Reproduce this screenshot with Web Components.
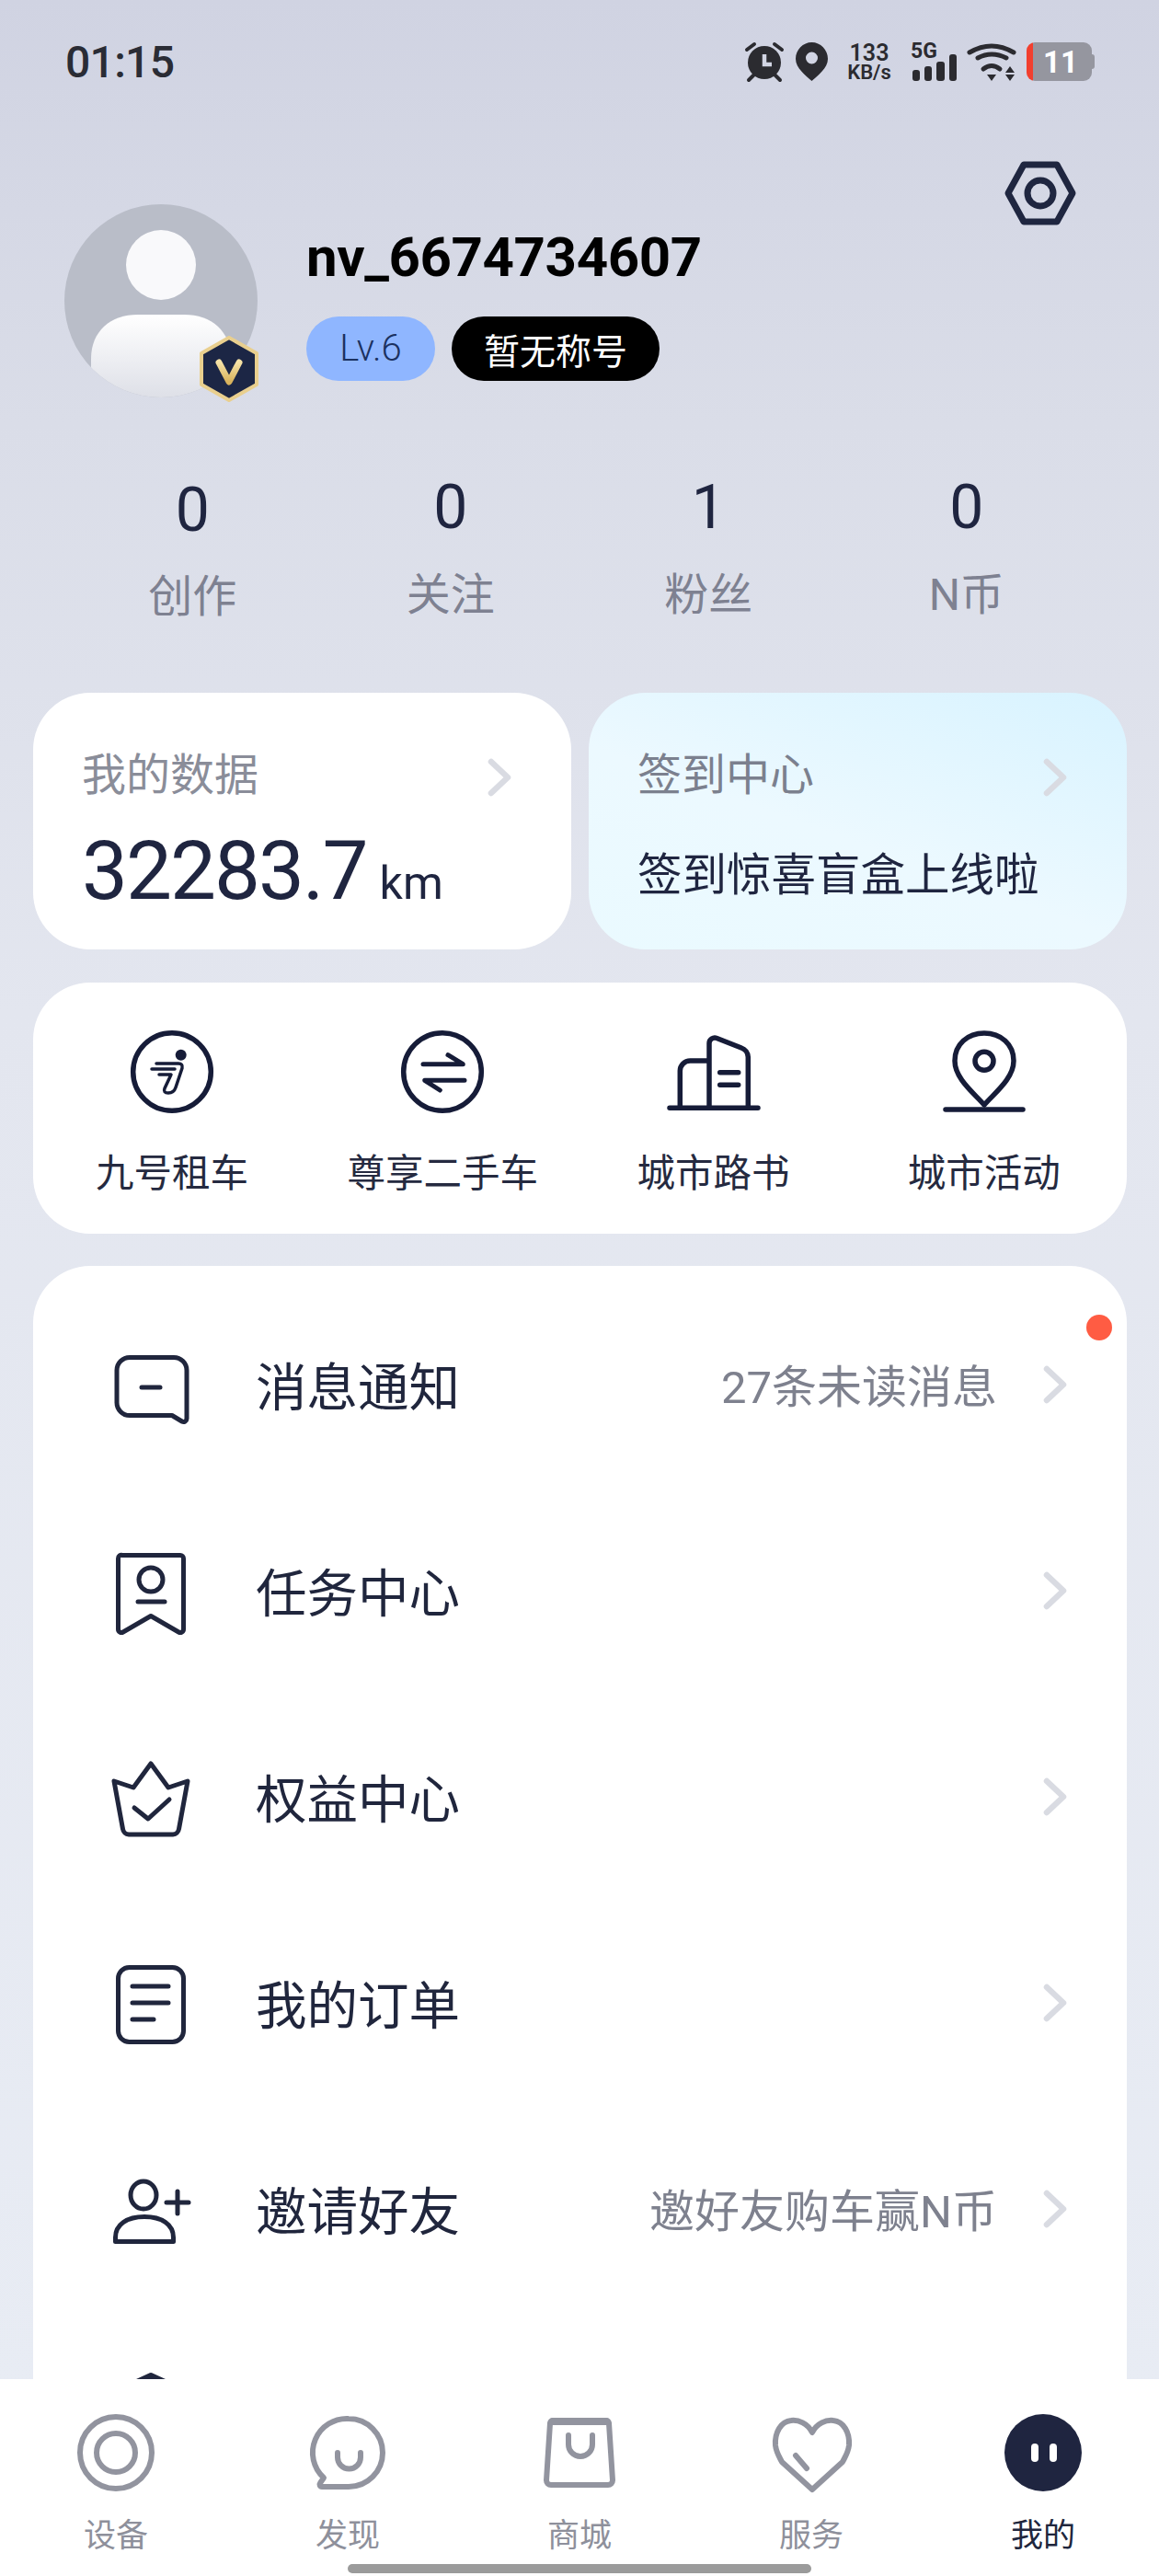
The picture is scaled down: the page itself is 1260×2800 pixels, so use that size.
<!DOCTYPE html>
<html lang="zh">
<head>
<meta charset="utf-8">
<title>我的</title>
<style>
html,body{margin:0;padding:0;background:#e5e8f1}
body{font-family:"Roboto","Noto Sans CJK SC",sans-serif;color:#1f2540}
</style>
</head>
<body>
<x-page>
  <x-status-bar slot="top"></x-status-bar>
  <x-profile name="nv_6674734607" level="Lv.6" title="暂无称号"></x-profile>
  <x-stats>
    <x-stat value="0" nudge>创作</x-stat>
    <x-stat value="0">关注</x-stat>
    <x-stat value="1">粉丝</x-stat>
    <x-stat value="0">N币</x-stat>
  </x-stats>
  <x-cards>
    <x-card heading="我的数据"><x-mileage value="32283.7" unit="km"></x-mileage></x-card>
    <x-card heading="签到中心" tone="sky"><x-promo>签到惊喜盲盒上线啦</x-promo></x-card>
  </x-cards>
  <x-quick-grid>
    <x-quick icon="scooter">九号租车</x-quick>
    <x-quick icon="swap">尊享二手车</x-quick>
    <x-quick icon="city">城市路书</x-quick>
    <x-quick icon="place">城市活动</x-quick>
  </x-quick-grid>
  <x-list>
    <x-row icon="msg"><span>消息通知</span><span slot="hint">27条未读消息</span></x-row>
    <x-row icon="task">任务中心</x-row>
    <x-row icon="crown">权益中心</x-row>
    <x-row icon="order">我的订单</x-row>
    <x-row icon="invite"><span>邀请好友</span><span slot="hint">邀好友购车赢N币</span></x-row>
    <x-row icon="shield" bare></x-row>
  </x-list>
  <x-nav slot="nav">
    <x-nav-item icon="n-device">设备</x-nav-item>
    <x-nav-item icon="n-find">发现</x-nav-item>
    <x-nav-item icon="n-shop">商城</x-nav-item>
    <x-nav-item icon="n-serve">服务</x-nav-item>
    <x-nav-item icon="n-me" active>我的</x-nav-item>
  </x-nav>
</x-page>
<script>
const S='fill="none" stroke="currentColor" stroke-linecap="round" stroke-linejoin="round"';
const ICONS={
 msg:`<g ${S} stroke-width="5"><path d="M27 17.5H75a14 14 0 0 1 14 14V84a3.5 3.5 0 0 1-5.2 3L73 80.5H27a14 14 0 0 1-14-14V31.5a14 14 0 0 1 14-14Z"/><path d="M40 50H60"/></g>`,
 task:`<g ${S} stroke-width="5"><path d="M19 8.5H82a3.5 3.5 0 0 1 3.5 3.5V89a3.5 3.5 0 0 1-5.3 3L50 74.5 19.8 92a3.5 3.5 0 0 1-5.3-3V12a3.5 3.5 0 0 1 4.5-3.5Z"/><circle cx="50" cy="35" r="13"/><path d="M36 59H65"/></g>`,
 crown:`<g ${S} stroke-width="5"><path d="M10 30 31 37 50 11 69 37 90 30 80.5 82a7 7 0 0 1-6.5 6H26a7 7 0 0 1-6.5-6Z"/><path d="M32 59 47 71 70 50"/></g>`,
 order:`<g ${S} stroke-width="5"><rect x="14.5" y="8.5" width="71" height="81" rx="12"/><path d="M30 29H69M30 47H69M30 65H53"/></g>`,
 invite:`<g ${S} stroke-width="5"><ellipse cx="42" cy="32" rx="14" ry="15"/><path d="M11.5 82.5V78C11.5 64 24 55.5 43 55.5S74.5 64 74.5 78v4.5Z"/><path d="M67 40H91M79 28V52"/></g>`,
 shield:`<g ${S} stroke-width="6"><path d="M50 4 85 20V70L50 96 15 70V20Z"/></g>`,
 scooter:`<g ${S}><circle cx="50" cy="50" r="42.3" stroke-width="5.5"/><path stroke-width="3.5" d="M33 41H57Q62 41 61 46L54 67Q52 73 46 73 40 73 42 68L49 53H36M28 47H53"/></g><circle cx="59.7" cy="31.7" r="6" fill="currentColor"/>`,
 swap:`<g ${S} stroke-width="5"><circle cx="50" cy="50" r="42.3" stroke-width="5.5"/><path d="M29 41.7H72.3L56 31.7M74 59.3H30.7L47.3 70"/></g>`,
 city:`<g ${S} stroke-width="5.5"><path d="M2 89.3H98M45 89V19a6 6 0 0 1 8.3-5.5L80 24a11 11 0 0 1 7.3 10V89M13.3 89V49a11 11 0 0 1 11-11H45"/><path d="M56.7 50.7H76.7M56.7 64.3H76.7"/></g>`,
 place:`<g ${S} stroke-width="5.5"><path d="M50 86C40 74 18 58 18 38 18 20 32 8 50 8S82 20 82 38C82 58 60 74 50 86Z"/><circle cx="50" cy="38.3" r="10"/><path d="M8 91H92"/></g>`,
 'n-device':`<g ${S} stroke-width="6"><circle cx="50" cy="50" r="39"/><circle cx="50" cy="50" r="21"/></g>`,
 'n-find':`<g ${S} stroke-width="6"><path d="M51 13a37 37 0 0 1 0 74H22a2.5 2.5 0 0 1-2-4l4-5.7A37 37 0 0 1 51 13Z"/><path d="M39 50v5a12.500 12.500 0 0 0 25 0v-5"/></g>`,
 'n-shop':`<g ${S} stroke-width="6"><path d="M21 15H79a3 3 0 0 1 3 3L86 80a5 5 0 0 1-5 5H19a5 5 0 0 1-5-5L18 18a3 3 0 0 1 3-3Z"/><path stroke-width="8" d="M21 16H79"/><path d="M38 31V41a13 13 0 0 0 26 0V31"/></g>`,
 'n-serve':`<g ${S} stroke-width="6"><path d="M51 28C46 18 36 14 28 15 17 16 10 28 11 42 12 50 15 54 18 60L51 90 84 60C87 54 90 50 91 42 92 28 85 16 74 15 66 14 56 18 51 28Z"/><path d="M33 53 45 67"/></g>`,
 'n-me':`<circle cx="50" cy="50" r="42" fill="#1f2540"/><rect x="37" y="40" width="8" height="20" rx="4" fill="#fff"/><rect x="57" y="40" width="8" height="20" rx="4" fill="#fff"/>`,
 chev:`<path d="M4 4 22 21 4 38" fill="none" stroke="currentColor" stroke-width="6.5" stroke-linecap="round" stroke-linejoin="round"/>`,
 gear:`<g ${S} stroke-width="7"><path d="M5 37 22 6H58L75 37 58 68H22Z"/><circle cx="40" cy="37" r="14"/></g>`,
 alarm:`<circle cx="21" cy="22" r="18" fill="currentColor"/><path d="M21 13V24H29" fill="none" stroke="#d2d5e3" stroke-width="4.5"/><g fill="none" stroke="currentColor" stroke-width="4" stroke-linecap="round"><path d="M2 8 10 2M32 2 40 8M4 41 10 35M32 35 38 41"/></g>`,
 pin:`<path fill="currentColor" fill-rule="evenodd" d="M17.5 0C27 0 35 8 35 18 35 28 24 36 17.5 42 11 36 0 28 0 18 0 8 8 0 17.5 0ZM17.5 10.5a6.5 6.5 0 1 0 0 13 6.5 6.5 0 0 0 0-13Z"/>`,
 bars:`<g fill="currentColor"><rect x="2" y="30" width="8" height="12" rx="3"/><rect x="15" y="26" width="8" height="16" rx="3"/><rect x="28" y="21" width="9" height="21" rx="3"/><rect x="42" y="13" width="8" height="29" rx="3"/></g>`,
 wifi:`<g fill="none" stroke="currentColor" stroke-width="5" stroke-linecap="round"><path d="M2 11Q26-3 50 11M11 17Q26 9 42 17M17 29Q26 22 35 29"/></g><g fill="currentColor"><path d="M21 35H31L26 42ZM41 33H51L46 26ZM41 35H51L46 42Z"/></g>`
};
function svg(name,w,h,vw,vh){return `<svg xmlns="http://www.w3.org/2000/svg" width="${w}" height="${h}" viewBox="0 0 ${vw||w} ${vh||h}" style="display:block;overflow:visible" aria-hidden="true">${ICONS[name]}</svg>`}
function def(tag,render){
  customElements.define(tag,class extends HTMLElement{
    constructor(){super();this.attachShadow({mode:'open'})}
    connectedCallback(){this.shadowRoot.innerHTML=render(this)}
  });
}
def('x-page',()=>`<style>
:host{display:flex;flex-direction:column;width:1260px;height:2800px;overflow:hidden;
background:linear-gradient(180deg,#d0d3e2 0,#dadde8 460px,#e3e6ef 1100px,#e8ecf4 2600px)}
.scroll{flex:1;min-height:0;overflow:hidden;display:flex;flex-direction:column}
</style><div class="scroll"><slot name="top"></slot><slot></slot></div><slot name="nav"></slot>`);
def('x-status-bar',()=>`<style>
:host{display:flex;align-items:center;justify-content:space-between;height:134px;padding:0 70px 0 71px;color:#2b2b30;flex:none;box-sizing:border-box}
.t{font:500 48px/1 Roboto,sans-serif;letter-spacing:-.7px;color:#2a2c35;padding-top:2px}
.g{display:flex;align-items:center}
.sp{display:flex;flex-direction:column;align-items:center;width:50px;height:42px;margin:0 20px;white-space:nowrap}
.sp b{font:600 25px/23px Roboto,sans-serif}.sp i{font:600 22px/20px Roboto,sans-serif;font-style:normal}
.sig{display:grid;width:50px;height:42px;margin-right:12px}
.sig>*{grid-area:1/1}.sig b{font:700 23px/19px Roboto,sans-serif;height:19px}
.bat{display:flex;align-items:center;margin-left:11px}
.body{width:71px;height:42px;border-radius:9px;background:linear-gradient(90deg,#f23f2e 0,#f23f2e 7px,#95969f 7px);display:flex;align-items:center;justify-content:center;color:#fff;font:700 33px/1 Roboto,sans-serif;padding-left:3px;box-sizing:border-box}
.cap{width:3px;height:16px;background:#95969f;border-radius:0 3px 3px 0}
</style><div class="t">01:15</div><div class="g">
<div style="margin-right:13px">${svg('alarm',42,42)}</div><div>${svg('pin',35,42)}</div>
<div class="sp"><b>133</b><i>KB/s</i></div>
<div class="sig"><b>5G</b>${svg('bars',50,42)}</div>
<div>${svg('wifi',53,42)}</div>
<div class="bat"><div class="body">11</div><div class="cap"></div></div></div>`);
def('x-profile',e=>`<style>
:host{display:flex;align-items:flex-start;margin-top:41px;padding:0 89px 0 70px;flex:none}
.av{position:relative;width:210px;height:210px;margin-top:47px;flex:none}
.badge{position:absolute;left:147px;top:143px}
.info{margin:69px 0 0 53px;flex:1}
.name{font:700 60px/72px Roboto,sans-serif;letter-spacing:-.4px;color:#000}
.pills{display:flex;gap:18px;margin-top:28px}
.p{height:70px;border-radius:35px;display:flex;align-items:center;justify-content:center;box-sizing:border-box}
.l{width:140px;background:#8fb6ff;color:#1b3160;font:300 40px/1 Roboto,sans-serif}
.h{width:226px;background:#000;color:#fff;font:400 39px/1 "Noto Sans CJK SC",sans-serif}
.gear{color:#1f2640;flex:none;margin-top:-2px}
</style>
<div class="av"><svg xmlns="http://www.w3.org/2000/svg" width="210" height="210" viewBox="0 0 210 210" style="display:block"><defs><clipPath id="c"><circle cx="105" cy="105" r="105"/></clipPath><linearGradient id="b" x1="0" y1="0" x2="0" y2="1"><stop offset="0" stop-color="#fff"/><stop offset="1" stop-color="#dcdee6"/></linearGradient></defs><circle cx="105" cy="105" r="105" fill="#b9bdc8"/><circle cx="105" cy="66" r="38" fill="#f9f9fb"/><g clip-path="url(#c)"><path d="M29 168C29 138 50 120 80 120H130C160 120 181 138 181 168V215H29Z" fill="url(#b)"/></g></svg>
<div class="badge"><svg xmlns="http://www.w3.org/2000/svg" width="64" height="72" viewBox="0 0 64 72" style="display:block"><defs><linearGradient id="v" x1="0" y1="0" x2="0" y2="1"><stop offset="0" stop-color="#f6e2a6"/><stop offset="1" stop-color="#d8b25c"/></linearGradient></defs><path d="M32 2 62 19V53L32 70 2 53V19Z" fill="#1c2645" stroke="#e9cf8e" stroke-width="4" stroke-linejoin="round"/><path d="M21 29 32 50 43 29" fill="none" stroke="url(#v)" stroke-width="7" stroke-linecap="round" stroke-linejoin="round"/></svg></div></div>
<div class="info"><div class="name">${e.getAttribute('name')}</div><div class="pills"><div class="p l">${e.getAttribute('level')}</div><div class="p h">${e.getAttribute('title')}</div></div></div>
<div class="gear">${svg('gear',80,74)}</div>`);
def('x-stats',()=>`<style>:host{display:grid;grid-template-columns:repeat(4,280.5px);padding-left:69px;margin-top:77px;flex:none}</style><slot></slot>`);
def('x-stat',e=>`<style>
:host{display:flex;flex-direction:column;align-items:center;padding-top:${e.hasAttribute('nudge')?6:3}px}
.v{font:400 66px/80px Roboto,sans-serif;color:#1f2540}
.l{font:400 48px/60px "Roboto","Noto Sans CJK SC",sans-serif;color:#7e8191;margin-top:${e.hasAttribute('nudge')?24:25}px}
</style><div class="v">${e.getAttribute('value')}</div><div class="l"><slot></slot></div>`);
def('x-cards',()=>`<style>:host{display:grid;grid-template-columns:585px 585px;gap:19px;padding:0 35px 0 36px;margin-top:74px;flex:none}</style><slot></slot>`);
def('x-card',e=>`<style>
:host{display:block;height:279px;border-radius:62px;box-sizing:border-box;padding:55px 65px 0 53px;
background:${e.getAttribute('tone')==='sky'?'linear-gradient(200deg,#d8f3ff 0,#ecf9ff 55%,#eafaff 100%)':'#fff'}}
.h{display:flex;justify-content:space-between;align-items:center;height:60px;font:400 48px/60px "Noto Sans CJK SC",sans-serif;color:${e.getAttribute('tone')==='sky'?'#7b808e':'#8a8d99'}}
.c{color:#d9dbe2;padding-top:13px}
</style><div class="h"><span>${e.getAttribute('heading')}</span><span class="c">${svg('chev',26,42)}</span></div><slot></slot>`);
def('x-mileage',e=>`<style>:host{display:flex;align-items:baseline;gap:14px;margin-top:29px;height:100px}
.v{font:400 89px/100px Roboto,sans-serif;letter-spacing:-2px;color:#1f2540}.u{font:400 50px/1 Roboto,sans-serif;color:#1f2540}</style>
<span class="v">${e.getAttribute('value')}</span><span class="u">${e.getAttribute('unit')}</span>`);
def('x-promo',()=>`<style>:host{display:block;margin-top:49px;font:400 48.500px/60px "Noto Sans CJK SC",sans-serif;color:#1f2540}</style><slot></slot>`);
def('x-quick-grid',()=>`<style>:host{display:grid;grid-template-columns:repeat(4,294.25px);height:273px;box-sizing:border-box;margin:36px 35px 0 36px;padding:47px 0 0 4px;background:#fff;border-radius:62px;flex:none}</style><slot></slot>`);
def('x-quick',e=>`<style>:host{display:flex;flex-direction:column;align-items:center;color:#161c38}
.l{font:400 41.500px/56px "Noto Sans CJK SC",sans-serif;color:#252a40;margin-top:29px;white-space:nowrap}</style>
${svg(e.getAttribute('icon'),100,100)}<div class="l"><slot></slot></div>`);
def('x-list',()=>`<style>:host{display:block;position:relative;margin:35px 35px 0 36px;padding-top:20px;background:#fff;border-radius:62px 62px 0 0;flex:none}
.dot{position:absolute;right:16px;top:53px;width:28px;height:28px;border-radius:50%;background:#ff5c43}</style><div class="dot"></div><slot></slot>`);
def('x-row',e=>`<style>:host{display:flex;align-items:center;height:224px;padding:0 65px 0 78px;color:#20263d}
.t{margin-left:64px;font:400 55.500px/70px "Noto Sans CJK SC",sans-serif;flex:1;white-space:nowrap;padding-bottom:9px}
.h{font:400 49px/60px "Roboto","Noto Sans CJK SC",sans-serif;color:#7e818e;margin-right:50px;white-space:nowrap;padding-top:2px}
.c{color:#d9dbe2;padding-bottom:7px}</style>
${svg(e.getAttribute('icon'),100,100)}${e.hasAttribute('bare')?'':`<div class="t"><slot></slot></div><div class="h"><slot name="hint"></slot></div><div class="c">${svg('chev',26,42)}</div>`}`);
def('x-nav',()=>`<style>:host{display:block;flex:none;height:214px;background:#fff;box-sizing:border-box;padding-top:30px}
.g{display:grid;grid-template-columns:repeat(5,252px)}
.bar{width:504px;height:10px;border-radius:5px;background:#9b9b9b;margin:12px auto 0}</style><div class="g"><slot></slot></div><div class="bar"></div>`);
def('x-nav-item',e=>`<style>:host{display:flex;flex-direction:column;align-items:center;color:#92949f}
.l{font:400 35px/44px "Noto Sans CJK SC",sans-serif;margin-top:15px;color:${e.hasAttribute('active')?'#20263d':'#8e909b'}}</style>
${svg(e.getAttribute('icon'),100,100)}<div class="l"><slot></slot></div>`);
</script>
</body>
</html>
